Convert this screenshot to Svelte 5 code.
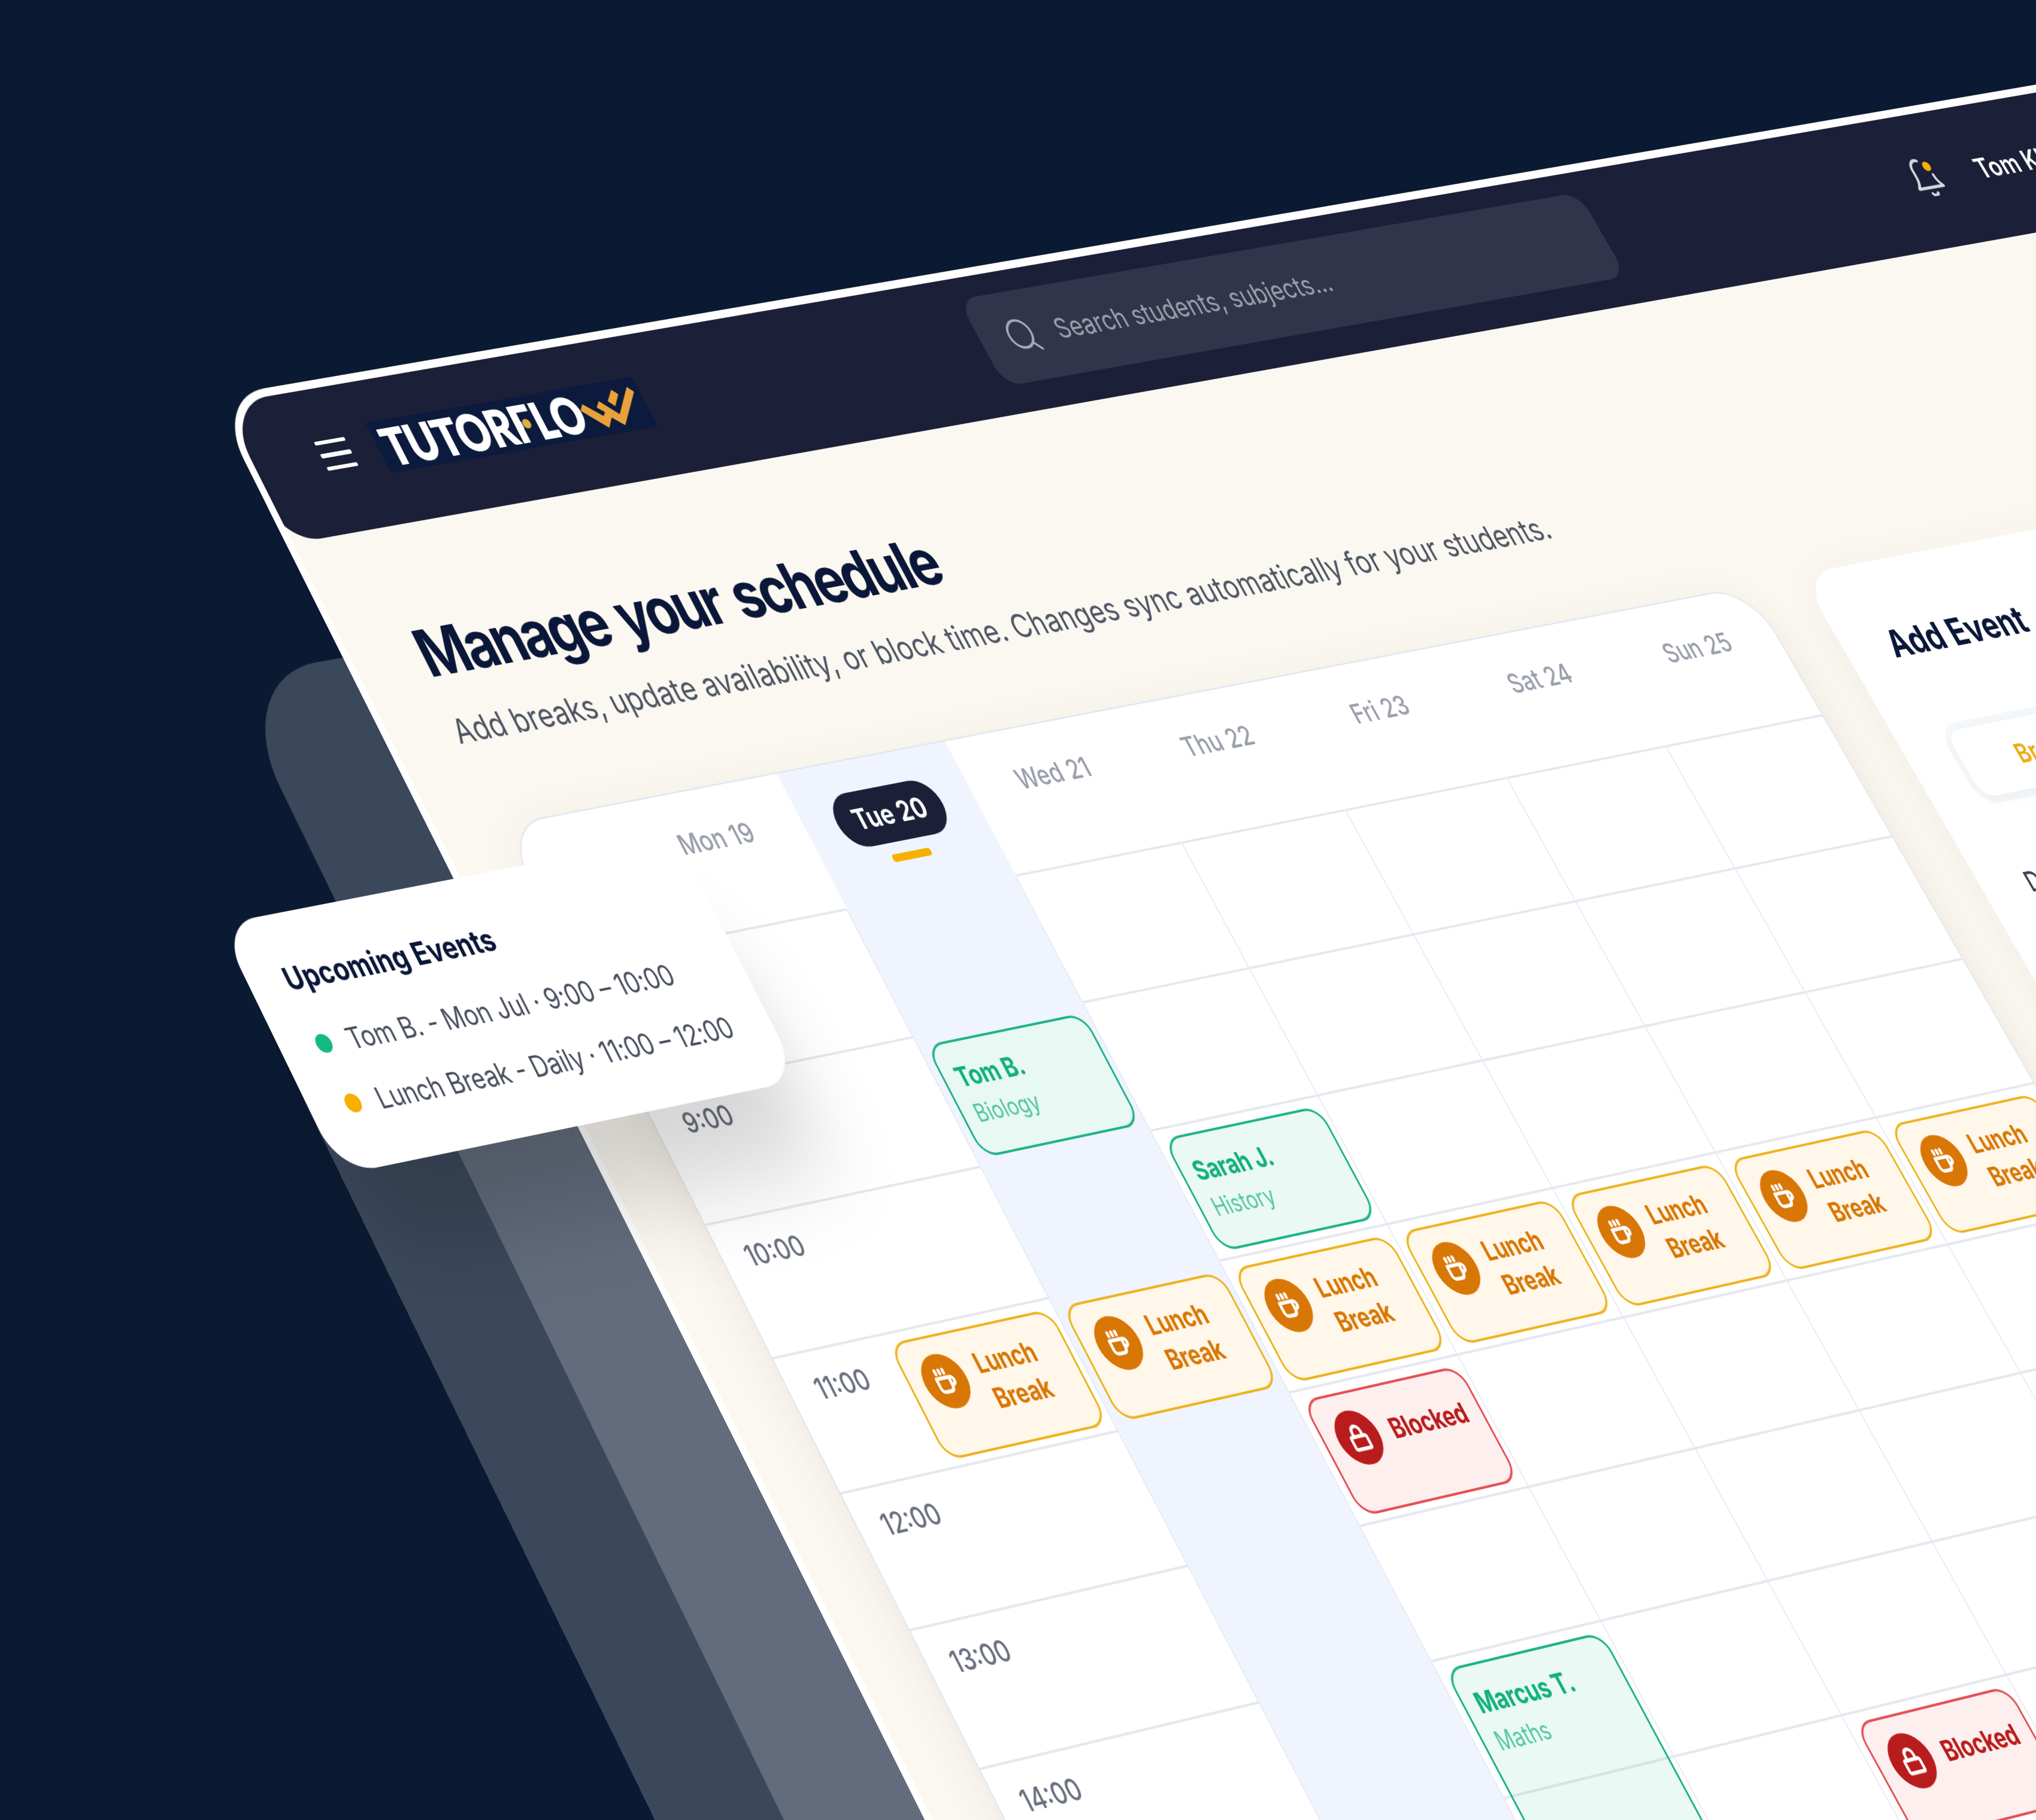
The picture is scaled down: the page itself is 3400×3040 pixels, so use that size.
<script lang="ts">
	type Kind = 'lesson' | 'lunch' | 'blocked';
	type Entry = { day: number; hour: number; span?: number; kind: Kind; title: string; note?: string };

	const days = ['Mon 19', 'Tue 20', 'Wed 21', 'Thu 22', 'Fri 23', 'Sat 24', 'Sun 25'];
	const today = 1;
	const hours = [8, 9, 10, 11, 12, 13, 14, 15, 16, 17];

	const entries: Entry[] = [
		{ day: 1, hour: 9, kind: 'lesson', title: 'Tom B.', note: 'Biology' },
		{ day: 2, hour: 10, kind: 'lesson', title: 'Sarah J.', note: 'History' },
		...days.map((_, day): Entry => ({ day, hour: 11, kind: 'lunch', title: 'Lunch Break' })),
		{ day: 2, hour: 12, kind: 'blocked', title: 'Blocked' },
		{ day: 2, hour: 14, span: 2, kind: 'lesson', title: 'Marcus T.', note: 'Maths' },
		{ day: 4, hour: 15, kind: 'blocked', title: 'Blocked' },
	];

	const upcoming = [
		{ color: '#12b981', text: 'Tom B. - Mon Jul · 9:00 – 10:00' },
		{ color: '#f5b000', text: 'Lunch Break - Daily · 11:00 – 12:00' },
	];

	function find(day: number, hour: number){
		return entries.filter(e => e.day === day && e.hour === hour);
	}
</script>

<div class="stage">
	<div class="plane">
		<div class="ghost ghost-back"></div>
		<div class="ghost ghost-front"></div>

		<main class="window">
			<header>
				<div class="brand">
					<div class="burger"><i></i><i></i><i></i></div>
					<svg class="logo" viewBox="0 0 455 70">
						<rect width="455" height="70" fill="#0b1a3d" />
						<text x="11" y="60.500" textLength="336" lengthAdjust="spacingAndGlyphs">TUTORFLO</text>
						<rect x="243.500" y="27" width="19" height="20" fill="#0b1a3d" />
						<circle cx="251" cy="37" r="6.6" fill="#e0b13c" />
						<path fill="#e9a23b" d="M354 24.4 346 32.6 377.4 61 389.5 48.2 404.7 61.2 446 20 438.4 12 405 45.7 382.5 24.2 374 32 383.5 39.8 378.1 44.6ZM411.4 12.3 419.1 19.6 404.5 34.4 396.7 26.2Z" />
					</svg>
				</div>
				<div class="search">
					<svg viewBox="0 0 24 24"><circle cx="11" cy="11" r="8" /><path d="m21 21-4.35-4.35" /></svg>
					<span>Search students, subjects...</span>
				</div>
				<div class="account">
					<svg class="bell" viewBox="0 0 60 60">
						<path d="M30 7C20 3 12 12 13 22c0 10 0 17-7 25h46c-4-5-7-9-7-17" />
						<path d="M25 56c2 4 8 4 10 0" />
						<circle cx="42" cy="17" r="7" />
					</svg>
					<span>Tom Klein</span>
				</div>
			</header>

			<div class="content">
				<div class="left">
					<h1>Manage your schedule</h1>
					<p class="lead">Add breaks, update availability, or block time. Changes sync automatically for your students.</p>

					<section class="calendar">
						<div class="row head">
							<div class="time"></div>
							{#each days as day, d}
								<div class="cell" class:today={d === today}>
									<span>{day}</span>
									{#if d === today}<b></b>{/if}
								</div>
							{/each}
						</div>
						{#each hours as hour}
							<div class="row">
								<div class="time">{hour}:00</div>
								{#each days as _, d}
									<div class="cell" class:today={d === today}>
										{#each find(d, hour) as e}
											<article class={e.kind} style="height:{(e.span || 1) * 170 - 22}px">
												{#if e.kind === 'lesson'}
													<strong>{e.title}</strong>
													<small>{e.note}</small>
												{:else}
													<span class="badge">
														{#if e.kind === 'lunch'}
															<svg viewBox="0 0 24 24"><path d="M17 9h1a3.500 3.500 0 0 1 0 7h-1M3 9h14v8a4 4 0 0 1-4 4H7a4 4 0 0 1-4-4ZM5 2v3M9.500 2v3M14 2v3" /></svg>
														{:else}
															<svg viewBox="0 0 24 24"><rect x="3" y="11" width="18" height="11" rx="1.500" /><path d="M7 11V7a5 5 0 0 1 10 0v4" /></svg>
														{/if}
													</span>
													<em>{e.title}</em>
												{/if}
											</article>
										{/each}
									</div>
								{/each}
							</div>
						{/each}
					</section>
				</div>

				<aside>
					<h2>Add Event</h2>
					<div class="tabs">
						<span class="active">Break</span>
						<span>Block</span>
					</div>
					<label for="date">Date</label>
				</aside>
			</div>
		</main>

		<section class="upcoming">
			<h3>Upcoming Events</h3>
			<ul>
				{#each upcoming as item}
					<li><i style="background:{item.color}"></i>{item.text}</li>
				{/each}
			</ul>
		</section>
	</div>
</div>

<style>
	:global(body){
		margin: 0;
		background: #0a1a32;
	}
	.stage{
		position: relative;
		width: 3400px;
		height: 3040px;
		overflow: hidden;
		background: #0a1a32;
		font-family: Inter, "Liberation Sans", sans-serif;
	}
	.stage :global(*){
		box-sizing: border-box;
	}
	h1, h2, h3, p, ul{
		margin: 0;
		padding: 0;
	}
	/* everything sits on one tilted sheet */
	.plane{
		position: absolute;
		left: 0;
		top: 0;
		width: 3500px;
		height: 2500px;
		transform-origin: 0 0;
		transform: matrix3d(1.015278, -0.155208, 0, 0.0000260417, 0.590588, 1.181765, 0, -0.0000376471, 0, 0, 1, 0, 357.6, 668.07, 0, 1.007113);
	}
	.ghost{
		position: absolute;
		width: 3000px;
		height: 2200px;
		border-radius: 146px;
		background: rgba(255, 255, 255, 0.2);
	}
	.ghost-back{
		left: -191px;
		top: 357px;
		transform: rotate(0.4deg);
		transform-origin: 0 0;
	}
	.ghost-front{
		left: -384px;
		top: 750px;
	}
	.window{
		position: relative;
		width: 3500px;
		height: 2500px;
		overflow: hidden;
		border-radius: 86px;
		background: #fbf8f1;
	}
	.window::after{
		content: "";
		position: absolute;
		inset: 0;
		border: 11px solid #fff;
		border-radius: 86px;
		pointer-events: none;
	}
	header{
		display: grid;
		grid-template-columns: 1140px 1136px 1fr;
		align-items: center;
		height: 204px;
		padding-left: 121px;
		border-radius: 0 0 58px 58px;
		background: #1b1f38;
	}
	.brand{
		display: flex;
		align-items: center;
		gap: 44px;
	}
	.burger{
		display: flex;
		flex-direction: column;
		gap: 12px;
		margin-top: -4px;
	}
	.burger i{
		width: 51px;
		height: 5.500px;
		border-radius: 2px;
		background: #fff;
	}
	.logo{
		width: 455px;
		height: 70px;
	}
	.logo text{
		font: 900 67px Lato, sans-serif;
		fill: #fff;
		stroke: #fff;
		stroke-width: 2px;
	}
	.search{
		display: flex;
		align-items: center;
		gap: 31px;
		height: 125px;
		padding-left: 44px;
		border-radius: 30px;
		background: #31354b;
		color: #9c9fab;
		font-size: 38px;
	}
	.search span{
		margin-top: -3px;
	}
	.search svg{
		width: 58px;
		height: 58px;
		fill: none;
		stroke: #a9acb7;
		stroke-width: 1.500;
		stroke-linecap: round;
	}
	.account{
		display: flex;
		align-items: center;
		gap: 67px;
		padding-left: 589px;
		color: #fff;
		font-size: 39px;
		font-weight: 600;
	}
	.bell{
		width: 60px;
		height: 60px;
		margin-top: -4px;
		fill: none;
		stroke: #d5d7e0;
		stroke-width: 4.500;
		stroke-linecap: round;
		stroke-linejoin: round;
	}
	.bell circle{
		fill: #f5b000;
		stroke: none;
	}
	.content{
		display: flex;
		gap: 97px;
		padding: 123px 0 0 115px;
	}
	.left{
		width: 2187px;
	}
	h1{
		height: 116px;
		margin-left: 3px;
		font-size: 85.500px;
		line-height: 90px;
		letter-spacing: -0.05em;
		word-spacing: 0.08em;
		white-space: nowrap;
		color: #0b1739;
	}
	.lead{
		height: 158px;
		margin-left: -3px;
		font-size: 43.800px;
		line-height: 68px;
		white-space: nowrap;
		color: #4e5563;
	}
	.calendar{
		overflow: hidden;
		margin-left: -1px;
		border: 2.500px solid #e3e6ef;
		border-radius: 66px 72px 0 0;
		background: #fff;
		box-shadow: 0 24px 73px rgba(90, 65, 40, 0.09);
	}
	.row{
		display: grid;
		grid-template-columns: 170px repeat(7, 288px);
		grid-template-rows: 100%;
		height: 170px;
	}
	.row.head{
		height: 184px;
	}
	.time{
		padding: 24px 3px 0 0;
		border-bottom: 3px solid #e5e8f0;
		font-size: 35.500px;
		line-height: 44px;
		font-weight: 500;
		text-align: center;
		color: #6a7080;
	}
	.cell{
		padding: 11px 7px 0 11px;
		border-right: 2.500px solid #e8ebf2;
		border-bottom: 3px solid #e5e8f0;
	}
	.cell.today{
		border-bottom-color: #eff4ff;
		background: #eff4ff;
	}
	.head .cell{
		display: flex;
		flex-direction: column;
		align-items: center;
		padding: 40px 0 0;
		border-right-color: transparent;
		font-size: 36px;
		line-height: 50px;
		font-weight: 500;
		color: #9a9eab;
	}
	.head .today span{
		padding: 11px 29px;
		border-radius: 36px;
		background: #1b1f38;
		color: #fff;
		font-size: 36.500px;
		font-weight: 700;
	}
	.head .today b{
		width: 65px;
		height: 10px;
		margin-top: 15px;
		border-radius: 4px;
		background: #f5b000;
	}
	article{
		position: relative;
		display: flex;
		border: 3px solid;
		border-radius: 26px;
	}
	.lesson{
		flex-direction: column;
		gap: 4px;
		padding: 22px 19px;
		border-color: #1eb386;
		background: rgba(18, 185, 129, 0.09);
		color: #12b07c;
	}
	.today .lesson{
		background: #e8f8f3;
	}
	.lesson strong{
		font-size: 34px;
		line-height: 44px;
		letter-spacing: -0.01em;
		font-weight: 700;
	}
	.lesson small{
		font-size: 30.500px;
		line-height: 42px;
		opacity: 0.7;
	}
	.lunch, .blocked{
		gap: 21px;
		padding: 20px 0 0 21px;
	}
	.lunch{
		border-color: #edb320;
		background: #fff7e9;
		color: #d97706;
	}
	.blocked{
		border-color: #e45055;
		background: #feefef;
		color: #b91c1c;
	}
	.badge{
		display: flex;
		align-items: center;
		justify-content: center;
		flex: none;
		width: 68px;
		height: 68px;
		border-radius: 50%;
		background: currentColor;
	}
	.badge svg{
		width: 34px;
		height: 34px;
		fill: none;
		stroke: #fff;
		stroke-width: 3.200;
		stroke-linecap: round;
		stroke-linejoin: round;
	}
	em{
		width: 102px;
		font-size: 33.500px;
		line-height: 45px;
		font-style: normal;
		font-weight: 700;
		text-align: center;
		letter-spacing: -0.01em;
	}
	.blocked em{
		width: auto;
		padding-top: 11px;
	}
	aside{
		flex: none;
		width: 1068px;
		height: 1900px;
		margin-top: 273px;
		padding: 80px 80px 0;
		border-radius: 58px;
		background: #fff;
		box-shadow: 0 24px 73px rgba(90, 65, 40, 0.07);
	}
	h2{
		height: 148px;
		font-size: 51px;
		line-height: 66px;
		color: #0b1739;
	}
	.tabs{
		display: grid;
		grid-template-columns: repeat(3, 1fr);
		height: 113px;
		padding: 10px;
		border-radius: 34px;
		background: #f5f8fa;
		color: #6a7080;
		font-size: 36px;
		font-weight: 600;
		line-height: 93px;
		text-align: center;
	}
	.tabs .active{
		border-radius: 24px;
		background: #fff;
		box-shadow: 0 5px 20px rgba(0, 0, 0, 0.04);
		color: #efab10;
	}
	label{
		display: block;
		margin-top: 84px;
		font-size: 37px;
		font-weight: 500;
		color: #3c4252;
	}
	.upcoming{
		position: absolute;
		left: -383px;
		top: 655px;
		width: 752px;
		height: 324px;
		padding: 54px 56px 0 57px;
		border-radius: 58px;
		background: #fff;
		box-shadow: 0 120px 120px -20px rgba(0, 0, 0, 0.17);
	}
	h3{
		font-size: 39.800px;
		line-height: 56px;
		color: #0b1739;
	}
	ul{
		display: flex;
		flex-direction: column;
		gap: 29px;
		margin-top: 32px;
		list-style: none;
	}
	li{
		display: flex;
		align-items: center;
		gap: 26px;
		height: 48px;
		font-size: 37px;
		letter-spacing: -0.011em;
		white-space: nowrap;
		color: #4a5060;
	}
	li i{
		width: 24px;
		height: 24px;
		border-radius: 50%;
	}
</style>
